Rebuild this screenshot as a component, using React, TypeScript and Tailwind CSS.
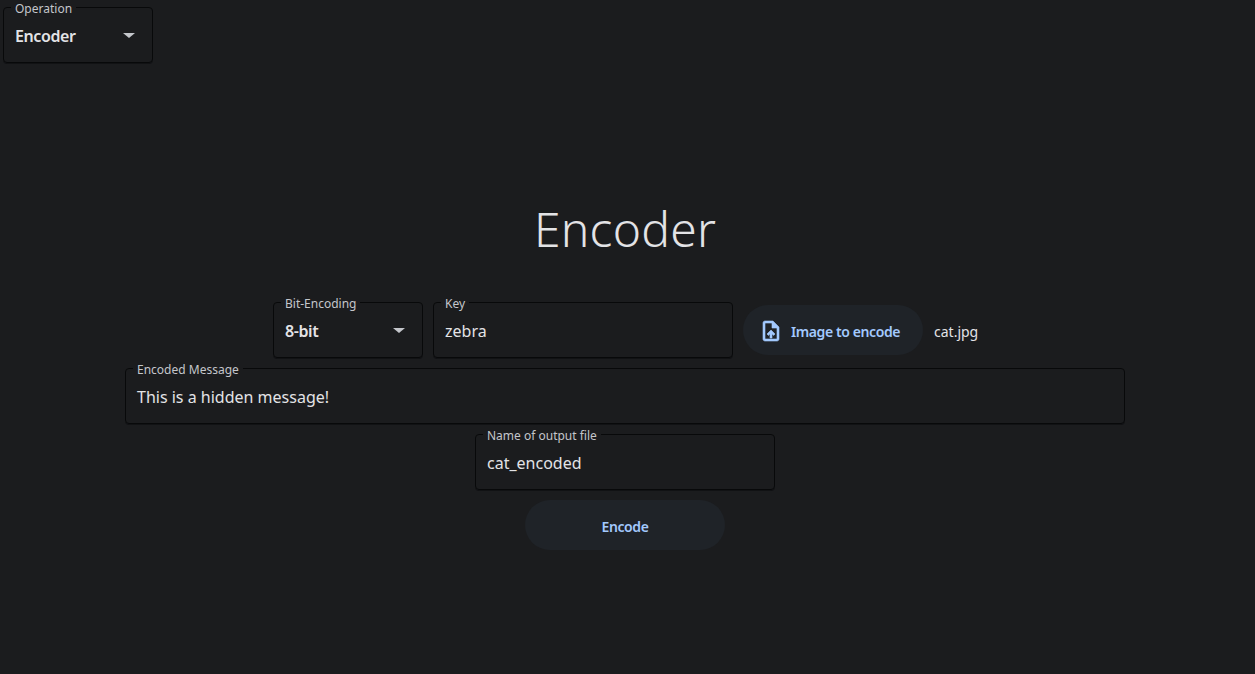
import React from 'react';

const Field = ({ label, value, bold, select, width }: { label: string; value: string; bold?: boolean; select?: boolean; width: string }) => (
  <div className={`relative h-14 shrink-0 rounded-[4px] border border-[#08090a] shadow-[0_1px_0_#111214] ${width}`}>
    <span className="absolute -top-[5px] left-[7px] bg-[#1b1c1e] px-[4px] text-[12px] leading-[12px] text-[#c4c6cb]">{label}</span>
    <div className={`flex h-full items-center justify-between pl-[11px] pr-[17px] pt-[2px] text-[16px] text-[#e3e3e6] ${bold ? 'font-semibold tracking-[-0.4px]' : 'font-normal'}`}>
      <span>{value}</span>
      {select && <span className="mb-[2px] h-0 w-0 border-x-[6px] border-t-[5px] border-x-transparent border-t-[#c4c6cb]" />}
    </div>
  </div>
);

const UploadIcon = () => (
  <svg width="24" height="24" viewBox="0 0 24 24" fill="#a3c9fe" stroke="#a3c9fe" strokeWidth="0.6">
    <path d="M14 2H6c-1.1 0-1.99.9-1.99 2L4 20c0 1.1.89 2 1.99 2H18c1.1 0 2-.9 2-2V8l-6-6zm4 18H6V4h7v5h5v11zM8 15.01l1.41 1.41L11 14.84V19h2v-4.16l1.59 1.59L16 15.01 12.01 11 8 15.01z" />
  </svg>
);

export default function App() {
  return (
    <div className="h-[674px] w-[1250px] overflow-hidden bg-[#1b1c1e] font-['Noto_Sans',sans-serif] shadow-[5px_0_0_#1b1c1e]">
      <div className="pl-[3px] pt-[7px]">
        <Field label="Operation" value="Encoder" bold select width="w-[150px]" />
      </div>

      <h1 className="mt-[134px] text-center text-[48px] font-light tracking-[0.25px] leading-[64px] text-[#e3e3e6]">Encoder</h1>

      <div className="mt-[41px] flex flex-col items-center gap-[10px]">
        <div className="flex items-center gap-[10px]">
          <Field label="Bit-Encoding" value="8-bit" bold select width="w-[150px]" />
          <Field label="Key" value="zebra" width="w-[300px]" />
          <button className="flex h-[50px] w-[180px] items-center gap-2 rounded-full bg-[#1f2328] pl-4 pt-[2px] text-[14px] font-semibold tracking-[-0.4px] text-[#a3c9fe]">
            <UploadIcon />
            <span>Image to encode</span>
          </button>
          <span className="w-[44px] pl-px pt-[2px] text-[14px] text-[#e3e3e6]">cat.jpg</span>
        </div>
        <Field label="Encoded Message" value="This is a hidden message!" width="w-[1000px]" />
        <Field label="Name of output file" value="cat_encoded" width="w-[300px]" />
        <button className="h-[50px] w-[200px] rounded-full bg-[#1f2328] pt-[2px] text-[14px] font-semibold tracking-[-0.4px] text-[#a3c9fe]">Encode</button>
      </div>
    </div>
  );
}
